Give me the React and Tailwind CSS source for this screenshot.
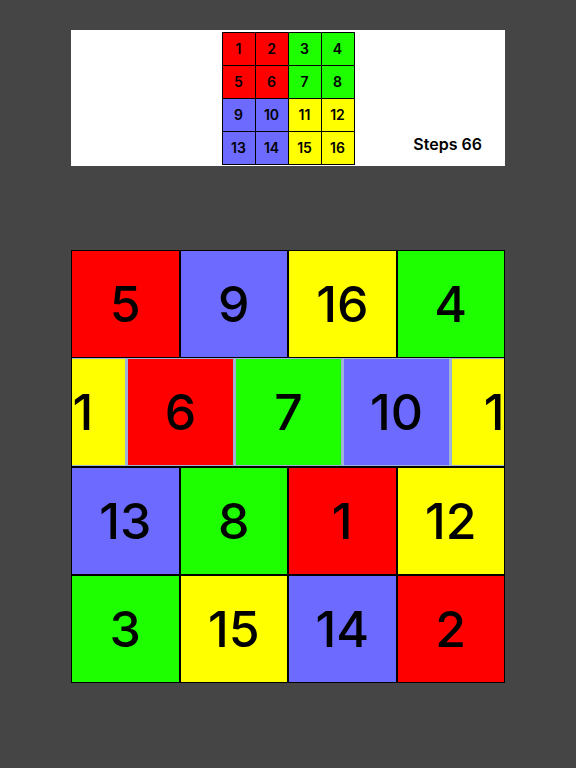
const R = "bg-[#ff0000]";
const G = "bg-[#1eff00]";
const B = "bg-[#6d6bff]";
const Y = "bg-[#ffff00]";

const mini = [
  [1, R], [2, R], [3, G], [4, G],
  [5, R], [6, R], [7, G], [8, G],
  [9, B], [10, B], [11, Y], [12, Y],
  [13, B], [14, B], [15, Y], [16, Y],
];

const row1 = [[5, R], [9, B], [16, Y], [4, G]];
const row2 = [[11, Y], [6, R], [7, G], [10, B], [11, Y]];
const row3 = [[13, B], [8, G], [1, R], [12, Y]];
const row4 = [[3, G], [15, Y], [14, B], [2, R]];

const font = { fontFamily: "Inter, 'Liberation Sans', sans-serif" };

function Row({ items }) {
  return (
    <div className="flex h-[106px] gap-[2px]">
      {items.map(([n, c], i) => (
        <div
          key={i}
          className={`flex flex-1 items-center justify-center text-[50px] font-medium leading-none text-black ${c}`}
        >
          {n}
        </div>
      ))}
    </div>
  );
}

export default function App() {
  return (
    <div className="min-h-screen bg-[#454545] pt-[30px]" style={font}>
      <div className="mx-auto grid h-[136px] w-[434px] grid-cols-[1fr_auto_1fr] bg-white">
        <div />
        <div className="flex items-center">
          <div className="grid w-[133px] grid-cols-4 gap-px bg-black p-px">
            {mini.map(([n, c]) => (
              <div
                key={n}
                className={`flex h-[32px] items-center justify-center text-[14px] font-semibold text-black ${c}`}
              >
                {n}
              </div>
            ))}
          </div>
        </div>
        <div className="flex items-end justify-end pb-[10px] pr-[23px]">
          <span className="text-[16px] font-semibold leading-6 text-black">Steps 66</span>
        </div>
      </div>

      <div className="mx-auto mt-[84px] flex w-[434px] flex-col bg-black p-px">
        <Row items={row1} />
        <div className="mt-px h-[108px] overflow-hidden bg-[#9fb3d9] py-px">
          <div className="-ml-[52px] flex h-[106px] gap-[3px]">
            {row2.map(([n, c], i) => (
              <div
                key={i}
                className={`flex h-[106px] w-[105px] shrink-0 items-center justify-center text-[50px] font-medium leading-none text-black ${c}`}
              >
                {n}
              </div>
            ))}
          </div>
        </div>
        <div className="mt-[2px]">
          <Row items={row3} />
        </div>
        <div className="mt-[2px]">
          <Row items={row4} />
        </div>
      </div>
    </div>
  );
}
